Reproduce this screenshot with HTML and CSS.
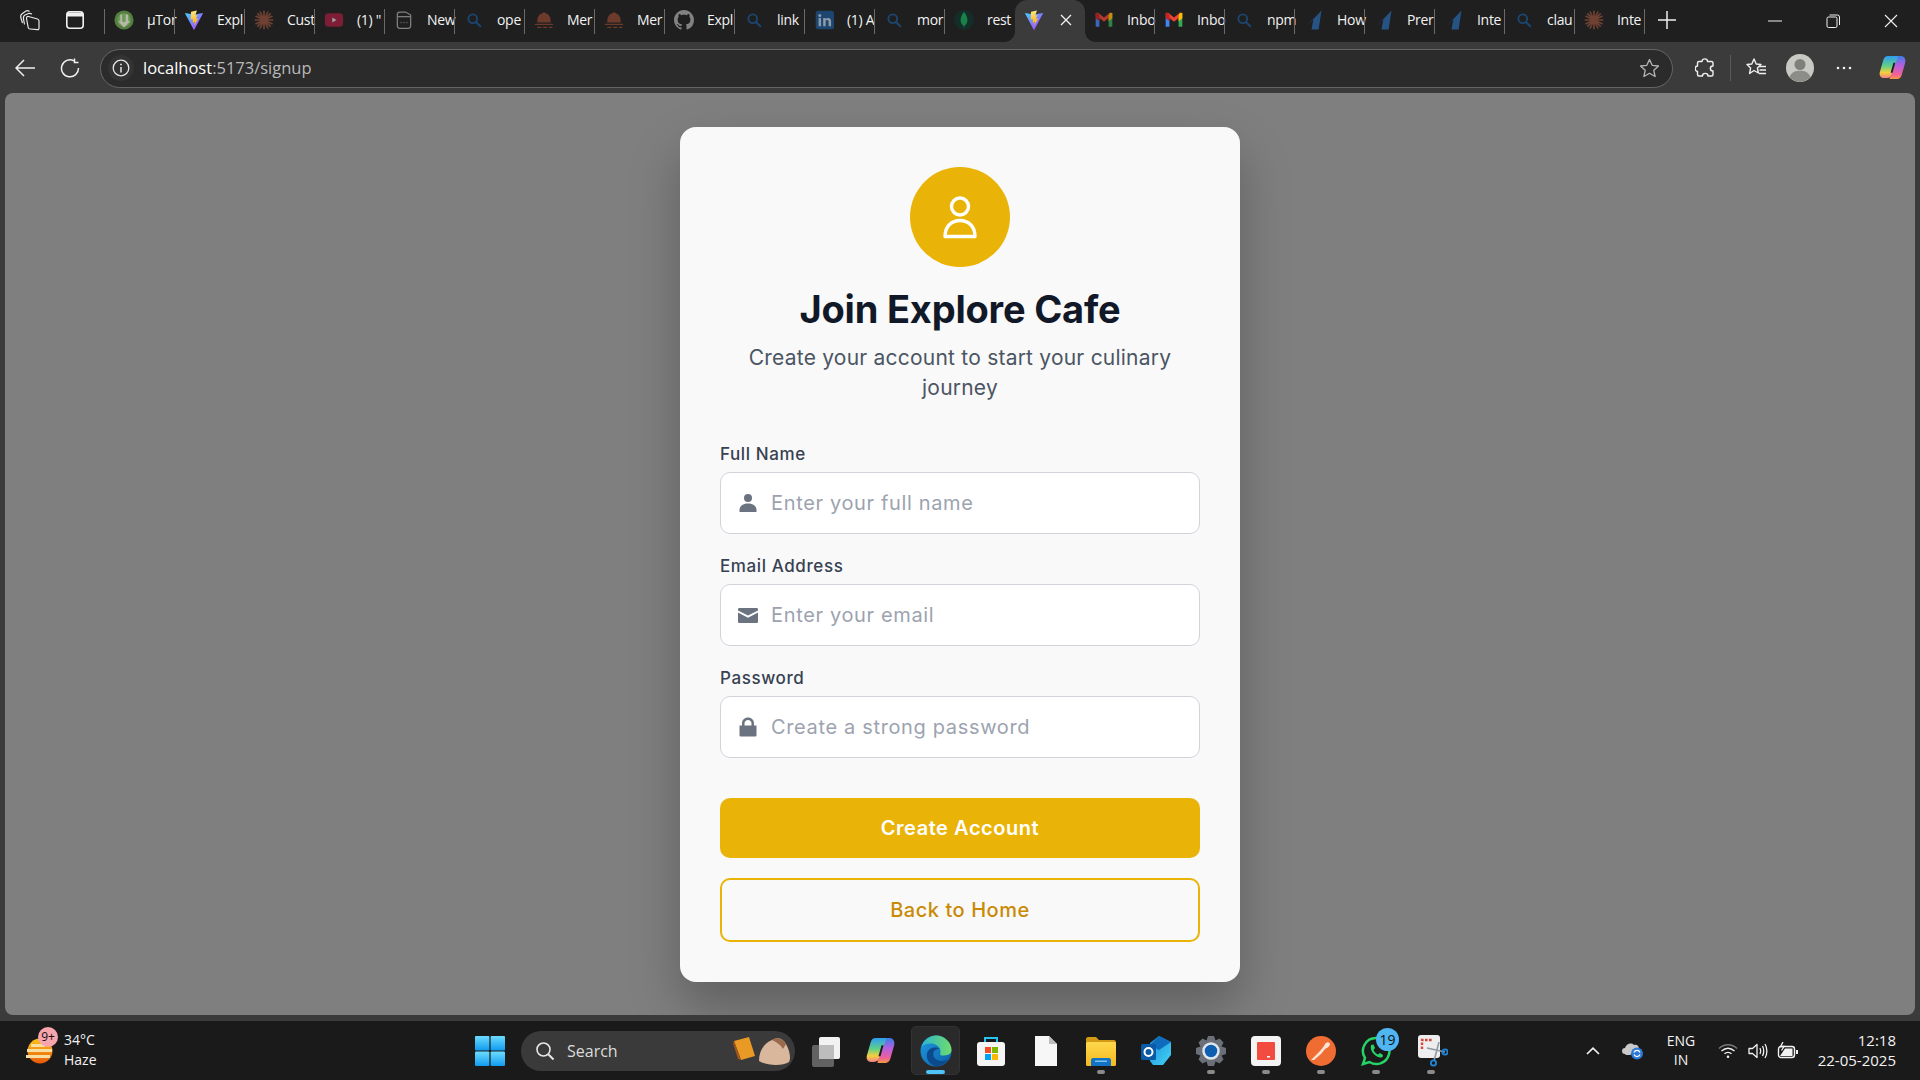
FILE: index.html
```html
<!DOCTYPE html>
<html lang="en">
<head>
<meta charset="utf-8">
<title>Explore Cafe - Sign up</title>
<link rel="stylesheet" href="styles.css">
</head>
<body>
<svg class="defs" aria-hidden="true">
  <defs>
    <linearGradient id="gViteA" x1="0" y1="0" x2="1" y2="1"><stop offset="0" stop-color="#41d1ff"/><stop offset="1" stop-color="#bd34fe"/></linearGradient>
    <linearGradient id="gViteB" x1="0" y1="0" x2="0" y2="1"><stop offset="0" stop-color="#ffea83"/><stop offset="1" stop-color="#ffa800"/></linearGradient>
    <linearGradient id="gWin" x1="0" y1="0" x2="0" y2="1"><stop offset="0" stop-color="#6ddcff"/><stop offset="1" stop-color="#0f9bf0"/></linearGradient>
    <linearGradient id="gCop" x1="0" y1="0" x2="0" y2="1"><stop offset="0" stop-color="#2f9df0"/><stop offset=".45" stop-color="#5fd08a"/><stop offset=".75" stop-color="#f5d03c"/><stop offset="1" stop-color="#f3808a"/></linearGradient>
    <linearGradient id="gCop2" x1="0" y1="0" x2="0" y2="1"><stop offset="0" stop-color="#3a7fe8"/><stop offset=".4" stop-color="#b45fe0"/><stop offset=".8" stop-color="#f0609a"/><stop offset="1" stop-color="#f79a3c"/></linearGradient>
    <linearGradient id="gEdge" x1="0" y1="0" x2="1" y2="1"><stop offset="0" stop-color="#1f9be0"/><stop offset="1" stop-color="#0c5ea8"/></linearGradient>
    <linearGradient id="gEdge2" x1="0" y1="0" x2="1" y2="0"><stop offset="0" stop-color="#2bb6d0"/><stop offset="1" stop-color="#6fdc6a"/></linearGradient>
    <linearGradient id="gSun" x1="0" y1="0" x2="0" y2="1"><stop offset="0" stop-color="#fcc419"/><stop offset="1" stop-color="#e8590c"/></linearGradient>
    <linearGradient id="gFold" x1="0" y1="0" x2="0" y2="1"><stop offset="0" stop-color="#ffd84d"/><stop offset="1" stop-color="#f5b91f"/></linearGradient>
    <linearGradient id="gOut" x1="0" y1="0" x2="1" y2="1"><stop offset="0" stop-color="#1a8fdc"/><stop offset="1" stop-color="#45d4f5"/></linearGradient>

    <symbol id="f-vite" viewBox="0 0 24 24">
      <path d="M1 3.500 12 5.500 23 3.500 12.500 23.500Q12 24 11.500 23.500Z" fill="url(#gViteA)"/>
      <path d="M15.500 .5 8.500 2 8 11.500 11 11 10.200 15 13 14.300 12.500 18.500 17 10 14 10.600 16.200 6 13.500 6.500Z" fill="url(#gViteB)"/>
    </symbol>
    <symbol id="f-claude" viewBox="0 0 24 24">
      <g stroke="#8e4f3a" stroke-width="2" stroke-linecap="round">
        <path d="M12 1.500V22.500M1.500 12H22.500M4.600 4.600 19.400 19.400M19.400 4.600 4.600 19.400M7.500 2.400 16.500 21.600M16.500 2.400 7.500 21.600M2.400 7.500 21.600 16.500M2.400 16.500 21.600 7.500"/>
      </g>
    </symbol>
    <symbol id="f-search" viewBox="-4 -4 32 32">
      <circle cx="10" cy="10" r="7" fill="none" stroke="#1c5590" stroke-width="3"/>
      <path d="M15.500 15.500 22 22" stroke="#1c5590" stroke-width="3.400" stroke-linecap="round"/>
    </symbol>
    <symbol id="f-mern" viewBox="0 0 24 24">
      <path d="M4 15C3.500 9 6 5 9 4.500 10 2.500 14 2.500 15 4.500 18 5 20.500 9 20 15Z" fill="#8a4632"/>
      <path d="M1 16.500H23V18H1ZM4 20H9V21.500H4ZM11 20H16V21.500H11ZM18 20H22V21.500H18Z" fill="#8a4632"/>
    </symbol>
    <symbol id="f-gmail" viewBox="0 0 24 24">
      <path d="M2 6V20H6.500V10.500Z" fill="#4285f4"/>
      <path d="M22 6V20H17.500V10.500Z" fill="#34a853"/>
      <path d="M2 6 12 14 22 6V3.500L19 3.200 12 9 5 3.200 2 3.500Z" fill="#ea4335"/>
      <path d="M17.500 7 19 3.200 22 3.500V10L17.500 13.500Z" fill="#fbbc04"/>
      <path d="M2 3.500 5 3.200 6.500 7V13.500L2 10Z" fill="#c5221f"/>
    </symbol>
    <symbol id="f-one" viewBox="0 0 24 24">
      <path d="M21 .5 17.500 23.500H9L11.500 10 2.500 20Z" fill="#2a68ac"/>
    </symbol>
    <symbol id="f-copilot" viewBox="0 0 28 26">
      <path d="M19 25H11L17 4C17.500 2.500 19 1 20.500 1H23C26.500 1 28 5 27.200 8L23.500 21C22.800 23.500 21 25 19 25Z" fill="url(#gCop2)"/>
      <path d="M9 1H20L12 22C11.500 23.500 9 24 7.500 24H5C1.500 24 0 21 .8 18L4.500 5C5.200 2.500 7 1 9 1Z" fill="url(#gCop)"/>
      <path d="M17 8H15L12 18.500H14Z" fill="#1d1d1d"/>
    </symbol>
  </defs>
</svg>

<header class="tabbar">
  <div class="tabbar-lead">
    <span class="lead-btn">
      <svg width="22" height="22" viewBox="0 0 22 22" fill="none" stroke="#e8e8e8" stroke-width="1.200" stroke-linejoin="round"><path d="M9.500 7.500 18.500 10Q20 10.500 20 12V19Q20 20.800 18.500 20.600L11 20Q9.500 20 9.200 18.500L7.500 9.500Q7.300 7.200 9.500 7.500Z"/><path d="M5.500 15.500 4.500 10Q4 7 6 6L9.500 4.500Q11 4 13 5"/><path d="M3.500 14 1.800 8.500Q1.300 5.500 3.500 4.500L7 2Q8.500 1.200 10.500 2.500"/></svg>
    </span>
    <span class="lead-btn">
      <svg width="20" height="20" viewBox="0 0 20 20" fill="none" stroke="#f0f0f0" stroke-width="1.600"><rect x="1.800" y="1.800" width="16.400" height="16.400" rx="3"/><path d="M2 4.500H18" stroke-width="4"/></svg>
    </span>
  </div>
  <nav class="tabs">
    <div class="tab tab-first"><svg class="fav fav-live" viewBox="0 0 24 24"><circle cx="12" cy="12" r="11.500" fill="#557f40"/><circle cx="12" cy="12" r="8" fill="#6b9a55"/><path d="M7.500 5.500H9.800V13C9.800 15.200 14 15.200 14 13V5.500H17V13.500H19.500L12 21 5 13.500H7.500Z" fill="#b8b8a8"/></svg><span class="tab-label">µTor</span></div>
    <div class="tab tab-live"><svg class="fav"><use href="#f-vite"/></svg><span class="tab-label">Expl</span></div>
    <div class="tab"><svg class="fav"><use href="#f-claude"/></svg><span class="tab-label">Cust</span></div>
    <div class="tab"><svg class="fav" viewBox="0 0 24 24"><rect x="1" y="4" width="22" height="16" rx="4.500" fill="#a31d40"/><path d="M10 9 15 12 10 15Z" fill="#d0d0d0"/></svg><span class="tab-label">(1) "</span></div>
    <div class="tab"><svg class="fav" viewBox="0 0 24 24" fill="none" stroke="#a8a8a8" stroke-width="1.500"><path d="M4 5.500A3 3 0 0 1 7 2.500H14L20 6V19A3 3 0 0 1 17 22H7A3 3 0 0 1 4 19Z"/><path d="M4 8H20"/><path d="M8 15H9M11.500 15H12.500M15 15H16" stroke-width="2"/></svg><span class="tab-label">New</span></div>
    <div class="tab"><svg class="fav"><use href="#f-search"/></svg><span class="tab-label">ope</span></div>
    <div class="tab"><svg class="fav"><use href="#f-mern"/></svg><span class="tab-label">Mer</span></div>
    <div class="tab"><svg class="fav"><use href="#f-mern"/></svg><span class="tab-label">Mer</span></div>
    <div class="tab"><svg class="fav" viewBox="0 0 16 16"><path fill="#a8a8a8" d="M8 0C3.580 0 0 3.580 0 8c0 3.540 2.290 6.530 5.470 7.590.4.070.55-.17.55-.38 0-.19-.01-.82-.01-1.490-2.010.37-2.530-.49-2.690-.94-.09-.23-.48-.94-.82-1.130-.28-.15-.68-.52-.01-.53.63-.01 1.080.58 1.230.82.72 1.210 1.870.87 2.330.66.070-.52.28-.87.51-1.070-1.780-.2-3.640-.89-3.640-3.950 0-.87.31-1.590.82-2.150-.08-.2-.36-1.020.08-2.120 0 0 .67-.21 2.200.82.64-.18 1.320-.27 2-.27.68 0 1.360.09 2 .27 1.530-1.040 2.200-.82 2.200-.82.44 1.100.16 1.920.08 2.120.51.56.82 1.270.82 2.150 0 3.070-1.870 3.750-3.650 3.950.29.25.54.73.54 1.480 0 1.070-.01 1.930-.01 2.200 0 .21.15.46.55.38A8.013 8.013 0 0016 8c0-4.420-3.580-8-8-8z"/></svg><span class="tab-label">Expl</span></div>
    <div class="tab"><svg class="fav"><use href="#f-search"/></svg><span class="tab-label">link</span></div>
    <div class="tab"><svg class="fav" viewBox="0 0 24 24"><rect x="2" y="1" width="22" height="22" rx="3" fill="#1b5590"/><g fill="#b7c9dc"><rect x="5.500" y="9.500" width="3" height="10"/><circle cx="7" cy="6.500" r="1.800"/><path d="M11 9.500H14V11C15.500 8.800 20.500 8.500 20.500 13.500V19.500H17.500V14C17.500 11.500 14 11.500 14 14V19.500H11Z"/></g></svg><span class="tab-label">(1) A</span></div>
    <div class="tab"><svg class="fav"><use href="#f-search"/></svg><span class="tab-label">mor</span></div>
    <div class="tab tab-prev"><svg class="fav" viewBox="0 0 24 24"><circle cx="12" cy="12" r="12" fill="#12332c"/><path d="M12 2C8.500 7 7.500 10 8 13.500 8.500 16.500 10.500 18.500 11.500 19L12 22.500 12.500 19C13.500 18.500 15.500 16.500 16 13.500 16.500 10 15.500 7 12 2Z" fill="#16a85a"/></svg><span class="tab-label">rest</span></div>
    <div class="tab tab-active">
      <svg class="fav fav-live"><use href="#f-vite"/></svg>
      <svg class="tab-close" viewBox="0 0 12 12"><path d="M1 1 11 11M11 1 1 11" stroke="#f2f2f2" stroke-width="1.300"/></svg>
    </div>
    <div class="tab"><svg class="fav"><use href="#f-gmail"/></svg><span class="tab-label">Inbo</span></div>
    <div class="tab tab-live"><svg class="fav"><use href="#f-gmail"/></svg><span class="tab-label">Inbo</span></div>
    <div class="tab"><svg class="fav"><use href="#f-search"/></svg><span class="tab-label">npm</span></div>
    <div class="tab"><svg class="fav"><use href="#f-one"/></svg><span class="tab-label">How</span></div>
    <div class="tab"><svg class="fav"><use href="#f-one"/></svg><span class="tab-label">Prer</span></div>
    <div class="tab"><svg class="fav"><use href="#f-one"/></svg><span class="tab-label">Inte</span></div>
    <div class="tab"><svg class="fav"><use href="#f-search"/></svg><span class="tab-label">clau</span></div>
    <div class="tab"><svg class="fav"><use href="#f-claude"/></svg><span class="tab-label">Inte</span></div>
  </nav>
  <span class="new-tab"><svg width="18" height="18" viewBox="0 0 18 18"><path d="M9 0V18M0 9H18" stroke="#f0f0f0" stroke-width="1.500"/></svg></span>
  <div class="win-ctrls">
    <span class="win-btn"><svg width="14" height="14" viewBox="0 0 14 14"><path d="M0 7H14" stroke="#f0f0f0" stroke-width="1"/></svg></span>
    <span class="win-btn"><svg width="14" height="14" viewBox="0 0 14 14" fill="none" stroke="#f0f0f0" stroke-width="1"><rect x="1" y="3" width="10" height="10.500" rx="1.500"/><path d="M3.500 1H11.500A2 2 0 0 1 13.500 3V11"/></svg></span>
    <span class="win-btn"><svg width="14" height="14" viewBox="0 0 14 14"><path d="M1 1 13 13M13 1 1 13" stroke="#f0f0f0" stroke-width="1.100"/></svg></span>
  </div>
</header>

<div class="toolbar">
  <span class="tool-btn"><svg width="20" height="18" viewBox="0 0 20 18" fill="none" stroke="#f0f0f0" stroke-width="1.500"><path d="M20 9H1M9 1 1 9 9 17"/></svg></span>
  <span class="tool-btn"><svg width="20" height="20" viewBox="0 0 20 20" fill="none" stroke="#f0f0f0" stroke-width="1.500"><path d="M14 2.800A8.500 8.500 0 1 0 18.500 10"/><path d="M14.500 .5V4.500H18.500"/></svg></span>
  <div class="address">
    <span class="site-info"><svg width="18" height="18" viewBox="0 0 18 18" fill="none" stroke="#e6e6e6" stroke-width="1.300"><circle cx="9" cy="9" r="7.800"/><path d="M9 8V13.500" stroke-width="1.500"/><path d="M9 4.800V6.200" stroke-width="1.700"/></svg></span>
    <span class="url"><span class="url-host">localhost</span>:5173/signup</span>
    <svg class="star" width="21" height="20" viewBox="0 0 21 20" fill="none" stroke="#b5b5b5" stroke-width="1.300"><path d="M10.500 1.500 13.200 7.300 19.500 8 14.800 12.300 16.100 18.500 10.500 15.300 4.900 18.500 6.200 12.300 1.500 8 7.800 7.300Z" stroke-linejoin="round"/></svg>
  </div>
  <div class="tool-right">
    <span class="tool-btn"><svg width="20" height="22" viewBox="0 0 20 22" fill="none" stroke="#f0f0f0" stroke-width="1.400" stroke-linejoin="round"><path d="M7 4.500C7 1 12.500 1 12.500 4.500H16.500C17.500 4.500 18 5 18 6V9C14.500 9 14.500 14 18 14V17.500C18 18.500 17.500 19 16.500 19H13C13 15.500 7.500 15.500 7.500 19H4C3 19 2.500 18.500 2.500 17.500V14.500C-.5 14.500-.5 9 2.500 9V6C2.500 5 3 4.500 4 4.500Z"/></svg></span>
    <span class="tool-sep"></span>
    <span class="tool-btn"><svg width="22" height="22" viewBox="0 0 22 22" fill="none" stroke="#f0f0f0" stroke-width="1.400" stroke-linejoin="round"><path d="M9 2 11.200 7 16 7.500 12.400 11 13.400 16 9 13.500 4.600 16.500 5.600 11 2 7.500 6.800 7Z"/><path d="M14 9.500H21M14.500 13H21M14 16.500H21"/></svg></span>
    <span class="tool-btn"><svg width="28" height="28" viewBox="0 0 28 28"><circle cx="14" cy="14" r="14" fill="#c9c9c4"/><circle cx="14" cy="10.500" r="5.500" fill="#7f7f7b"/><path d="M3.500 23C6 17.500 10 16.800 14 16.800S22 17.500 24.500 23A14 14 0 0 1 3.500 23Z" fill="#8c8c88"/></svg></span>
    <span class="tool-btn"><svg width="16" height="4" viewBox="0 0 16 4" fill="#f0f0f0"><circle cx="2" cy="2" r="1.300"/><circle cx="8" cy="2" r="1.300"/><circle cx="14" cy="2" r="1.300"/></svg></span>
    <span class="tool-btn tool-cop"><svg width="27" height="25"><use href="#f-copilot"/></svg></span>
  </div>
</div>

<main class="viewport">
  <section class="card">
    <div class="avatar">
      <svg width="100" height="100" viewBox="0 0 100 100" fill="none" stroke="#fff" stroke-width="3.400" stroke-linejoin="round"><circle cx="50" cy="39.500" r="8.500"/><path d="M35 69.500C35 59 42 53.500 50 53.500S65 59 65 69.500Z"/></svg>
    </div>
    <h1 class="title">Join Explore Cafe</h1>
    <p class="subtitle">Create your account to start your culinary journey</p>
    <form class="form">
      <div class="form-group">
        <label class="form-label" for="name">Full Name</label>
        <div class="field">
          <svg class="field-icon" width="22" height="22" viewBox="0 0 22 22" fill="#6b7280"><circle cx="11" cy="6" r="4"/><path d="M2.500 20V18C2.500 14 6 11.500 11 11.500S19.500 14 19.500 18V20Z"/></svg>
          <input class="field-input" id="name" type="text" placeholder="Enter your full name">
        </div>
      </div>
      <div class="form-group">
        <label class="form-label" for="email">Email Address</label>
        <div class="field">
          <svg class="field-icon" width="22" height="22" viewBox="0 0 22 22" fill="#6b7280"><path d="M1 5.500C1 4.500 1.500 4 2.500 4H19.500C20.500 4 21 4.500 21 5.500V6.500L11 11.500 1 6.500Z"/><path d="M1 8.500 11 13.800 21 8.500V17.500C21 18.500 20.500 19 19.500 19H2.500C1.500 19 1 18.500 1 17.500Z"/></svg>
          <input class="field-input" id="email" type="email" placeholder="Enter your email">
        </div>
      </div>
      <div class="form-group">
        <label class="form-label" for="password">Password</label>
        <div class="field">
          <svg class="field-icon" width="22" height="22" viewBox="0 0 22 22" fill="#6b7280"><path d="M5 9.500V7.500C5 4 7.500 1.500 11 1.500S17 4 17 7.500V9.500H19.500V19C19.500 20 19 20.500 18 20.500H4C3 20.500 2.500 20 2.500 19V9.500ZM7.500 9.500H14.500V7.500C14.500 5.500 13 4 11 4S7.500 5.500 7.500 7.500Z"/></svg>
          <input class="field-input" id="password" type="password" placeholder="Create a strong password">
        </div>
      </div>
      <button class="btn btn-primary" type="button">Create Account</button>
      <button class="btn btn-outline" type="button">Back to Home</button>
    </form>
  </section>
</main>

<footer class="taskbar">
  <div class="weather">
    <span class="weather-icon">
      <svg width="30" height="26" viewBox="0 0 30 26"><circle cx="15" cy="13" r="12.500" fill="url(#gSun)"/><path d="M6 6H20V9H6ZM2 11H27V14H2ZM1 17H25V20H1Z" fill="#f6dfa0"/></svg>
      <span class="weather-badge">9+</span>
    </span>
    <div class="weather-text"><span>34°C</span><span>Haze</span></div>
  </div>
  <span class="start">
    <svg width="30" height="30" viewBox="0 0 30 30" fill="url(#gWin)"><rect x="0" y="0" width="14.400" height="14.400" rx="1"/><rect x="15.600" y="0" width="14.400" height="14.400" rx="1"/><rect x="0" y="15.600" width="14.400" height="14.400" rx="1"/><rect x="15.600" y="15.600" width="14.400" height="14.400" rx="1"/></svg>
  </span>
  <div class="search-pill">
    <svg width="20" height="20" viewBox="0 0 20 20" fill="none" stroke="#e8e8e8" stroke-width="1.600"><circle cx="8.500" cy="8.500" r="6.500"/><path d="M13.500 13.500 18.500 18.500" stroke-width="2"/></svg>
    <span class="search-text">Search</span>
    <svg class="search-art" width="60" height="32" viewBox="0 0 60 32"><path d="M1 6 16 2 22 21 8 25Z" fill="#e99a25"/><path d="M1 6 8 25 5 24 0 8Z" fill="#a5541b"/><path d="M26 26C26 16 31 8 39 5 44 2 50 3 53 9 57 16 58 24 56 27 50 31 34 31 26 26Z" fill="#d9b79c"/><path d="M39 5C44 2 50 3 53 9L50 14C47 9 43 7 39 5Z" fill="#9a6a4c"/></svg>
  </div>
  <div class="task-icons">
    <span class="task-icon"><svg width="32" height="32" viewBox="0 0 32 32"><rect x="9" y="2" width="21" height="22" rx="2" fill="#f2f2f2"/><rect x="2" y="10" width="22" height="22" rx="2" fill="#6a6a6a" opacity=".9"/><rect x="9" y="10" width="15" height="14" fill="#bdbdbd"/></svg></span>
    <span class="task-icon"><svg width="29" height="27"><use href="#f-copilot"/></svg></span>
    <span class="task-icon task-active"><svg width="32" height="32" viewBox="0 0 32 32"><circle cx="16" cy="16" r="15.500" fill="url(#gEdge)"/><path d="M1.500 12C4 3 12 .5 16 .5 25 .5 31.500 8 31.500 15 31.500 19.500 27 20.500 22.500 20.500 19 20.500 20.500 18 20.500 16 20 11 15 8.500 10.500 8.500 6.500 8.500 3 10 1.500 12Z" fill="url(#gEdge2)"/><path d="M16 31C9.500 30 6 24 7 18.500 8.500 13 15 11 19.500 14 14.500 13.500 12 18 14 22 16.500 26.500 23.500 27 28.500 24 25 29 20 31.500 16 31Z" fill="#0d4a8c"/></svg><span class="task-bar"></span></span>
    <span class="task-icon"><svg width="30" height="32" viewBox="0 0 30 32"><path d="M9 8V3H21V8" fill="none" stroke="#27c2f0" stroke-width="2"/><rect x="1" y="7" width="28" height="24" rx="3" fill="#f5f5f5"/><rect x="9" y="12" width="6" height="6" fill="#f25022"/><rect x="16" y="12" width="6" height="6" fill="#7fba00"/><rect x="9" y="19" width="6" height="6" fill="#00a4ef"/><rect x="16" y="19" width="6" height="6" fill="#ffb900"/></svg></span>
    <span class="task-icon"><svg width="22" height="30" viewBox="0 0 22 30"><path d="M0 0H14L22 8V30H0Z" fill="#f7f7f7"/><path d="M14 0 22 8H14Z" fill="#bdbdbd"/></svg></span>
    <span class="task-icon"><svg width="30" height="30" viewBox="0 0 30 30"><path d="M0 3C0 2 1 1 2 1H10L13 4H28C29 4 30 5 30 6V8H0Z" fill="#d39a16"/><rect x="0" y="6" width="30" height="24" rx="1.500" fill="url(#gFold)"/><path d="M5 30V24C5 23 6 22 7 22H23C24 22 25 23 25 24V30Z" fill="#1273c4"/><rect x="9" y="24.500" width="12" height="1.500" fill="#7fc0ee"/></svg><span class="task-dot"></span></span>
    <span class="task-icon"><svg width="30" height="32" viewBox="0 0 30 32"><path d="M9 8 18 1 30 7V20L22 30H12L9 26Z" fill="url(#gOut)"/><path d="M18 1 30 7 18 15 9 10Z" fill="#0f6cbd"/><rect x="0" y="9" width="15" height="16" rx="1.500" fill="#0a5aa8"/><circle cx="7.500" cy="17" r="4" fill="none" stroke="#fff" stroke-width="2"/></svg></span>
    <span class="task-icon"><svg width="30" height="30" viewBox="0 0 30 30"><path d="M12 0H18L19.500 4.500 23.500 2.500 27.500 6.500 25.500 10.500 30 12V18L25.500 19.500 27.500 23.500 23.500 27.500 19.500 25.500 18 30H12L10.500 25.500 6.500 27.500 2.500 23.500 4.500 19.500 0 18V12L4.500 10.500 2.500 6.500 6.500 2.500 10.500 4.500Z" fill="#6b7078"/><circle cx="15" cy="15" r="7.500" fill="#0f5fb0" stroke="#dfe6ee" stroke-width="2.500"/></svg><span class="task-dot"></span></span>
    <span class="task-icon"><svg width="30" height="30" viewBox="0 0 30 30"><rect width="30" height="30" rx="4" fill="#f4f4f4"/><rect x="6" y="6" width="18" height="18" rx="1" fill="#f24b40"/><rect x="16" y="20" width="3" height="1.500" fill="#fff"/></svg><span class="task-dot"></span></span>
    <span class="task-icon"><svg width="30" height="30" viewBox="0 0 30 30"><circle cx="15" cy="15" r="15" fill="#ef6c33"/><path d="M5 24 14 15 18 10C19 7 22 5 23.500 7 25 9 22 12 19.500 12.500L15 18 8 24Z" fill="#fbe3d6"/></svg><span class="task-dot"></span></span>
    <span class="task-icon"><svg width="30" height="30" viewBox="0 0 30 30"><path d="M15 2A13 13 0 0 0 4 22L2 28 8.500 26A13 13 0 1 0 15 2Z" fill="none" stroke="#25d366" stroke-width="2.500"/><path d="M10 9 12.500 8.500 14 12 12.500 14C13.500 16 15 17.500 17 18.500L19 17 22 19 21.500 21C18 23.500 8 17 10 9Z" fill="#25d366"/></svg><span class="task-badge">19</span><span class="task-dot"></span></span>
    <span class="task-icon"><svg width="34" height="34" viewBox="0 0 34 34"><rect x="4" y="1" width="22" height="23" rx="3" fill="#eeeeee"/><path d="M8 15V6H18" fill="none" stroke="#d8433a" stroke-width="2.400" stroke-dasharray="2.600 1.400"/><path d="M20 27 25 8M31 18 13 14" stroke="#8d9aa6" stroke-width="1.600"/><circle cx="19.500" cy="29" r="2.600" fill="none" stroke="#1d86d9" stroke-width="1.800"/><circle cx="31" cy="18" r="2.600" fill="none" stroke="#1d86d9" stroke-width="1.800"/></svg><span class="task-dot"></span></span>
  </div>
  <div class="tray">
    <span class="tray-chev"><svg width="14" height="8" viewBox="0 0 14 8" fill="none" stroke="#f2f2f2" stroke-width="1.700"><path d="M1 7 7 1.200 13 7"/></svg></span>
    <span class="tray-cloud"><svg width="22" height="18" viewBox="0 0 22 18"><path d="M3 12A3 3 0 0 1 3 6C4 2 9 0 12 3 15 2 17 4 17 7L8 13H4Z" fill="#c9c9c9"/><circle cx="15" cy="11.500" r="6" fill="#2d7ad6"/><path d="M12 10.500A3.200 3.200 0 0 1 18 10.500M18 12.500A3.200 3.200 0 0 1 12 12.500" fill="none" stroke="#fff" stroke-width="1.200"/></svg></span>
    <div class="tray-lang"><span>ENG</span><span>IN</span></div>
    <span class="tray-icon"><svg width="20" height="16" viewBox="0 0 20 16" fill="none" stroke="#f2f2f2" stroke-width="1.400"><path d="M1 5.500C6 .5 14 .5 19 5.500" stroke="#777"/><path d="M3.500 8C7.500 4.500 12.500 4.500 16.500 8"/><path d="M6.500 10.800C8.500 9 11.500 9 13.500 10.800"/><circle cx="10" cy="13.800" r="1.300" fill="#f2f2f2" stroke="none"/></svg></span>
    <span class="tray-icon"><svg width="20" height="18" viewBox="0 0 20 18" fill="none" stroke="#f2f2f2" stroke-width="1.300"><path d="M1 6.500H4.500L9 2.500V15.500L4.500 11.500H1Z" stroke-linejoin="round"/><path d="M12 6C13 8 13 10 12 12M14.500 4C16 7 16 11 14.500 14M17 2C19.500 6 19.500 12 17 16"/></svg></span>
    <span class="tray-icon"><svg width="22" height="18" viewBox="0 0 22 18" fill="none" stroke="#f2f2f2" stroke-width="1.400"><rect x="1.500" y="4.500" width="16" height="11" rx="2.500"/><path d="M20 8V12" stroke-width="2"/><path d="M3 14 8 6.500H15.500V14Z" fill="#f2f2f2" stroke="none"/><path d="M6 0 3.500 4.500H7L4.500 8.500" stroke-width="1.300"/></svg></span>
    <div class="tray-clock"><span>12:18</span><span>22-05-2025</span></div>
  </div>
</footer>
</body>
</html>
```

FILE: styles.css
```css
* { box-sizing: border-box; }

html, body { margin: 0; height: 100%; }

body {
  display: flex;
  flex-direction: column;
  width: 1920px;
  height: 1080px;
  overflow: hidden;
  background: #3b3b3b;
  font-family: "Open Sans", "Noto Sans", sans-serif;
  color: #f2f2f2;
}

.defs { display: block; width: 0; height: 0; flex: none; }

/* Tab strip */
.tabbar {
  flex: 0 0 42px;
  display: flex;
  align-items: stretch;
  background: #1f1f1f;
}
.tabbar-lead { flex: 0 0 105px; display: flex; padding-left: 7px; }
.lead-btn { flex: 0 0 45px; display: flex; align-items: center; justify-content: center; padding-bottom: 2px; }
.tabs { display: flex; flex: 0 0 1540px; }
.tab {
  position: relative;
  flex: 0 0 70px;
  min-width: 0;
  display: flex;
  align-items: center;
  padding: 0 0 2px 9px;
}
.tab::after {
  content: "";
  position: absolute;
  right: 0;
  top: 9px;
  bottom: 8px;
  width: 1px;
  background: #6a6a6a;
}
.tab-first::before {
  content: "";
  position: absolute;
  left: -1px;
  top: 9px;
  bottom: 8px;
  width: 1px;
  background: #6a6a6a;
}
.tab-prev::after { display: none; }
.fav { flex: 0 0 20px; width: 20px; height: 20px; opacity: .72; }
.fav-live, .tab-live .fav { opacity: 1; }
.tab-label {
  margin-left: 13px;
  white-space: nowrap;
  font-size: 14px;
  line-height: 20px;
  letter-spacing: -.3px;
  color: #f2f2f2;
}
.tab-active {
  background: #3b3b3b;
  border-radius: 12px 12px 0 0;
}
.tab-active::before, .tab-active::after {
  content: "";
  position: absolute;
  top: auto;
  bottom: 0;
  width: 10px;
  height: 10px;
}
.tab-active::before {
  left: -10px;
  background: radial-gradient(circle at 0 0, transparent 9.5px, #3b3b3b 10px);
}
.tab-active::after {
  right: -10px;
  background: radial-gradient(circle at 100% 0, transparent 9.5px, #3b3b3b 10px);
}
.tab-close { flex: 0 0 12px; width: 12px; height: 12px; margin-left: 16px; }

.new-tab { flex: 0 0 44px; display: flex; align-items: center; justify-content: center; padding-bottom: 2px; }
.win-ctrls { margin-left: auto; display: flex; }
.win-btn { flex: 0 0 58px; display: flex; align-items: center; justify-content: center; }

/* Toolbar */
.toolbar {
  flex: 0 0 51px;
  display: flex;
  align-items: center;
  padding-left: 2px;
  background: #3b3b3b;
}
.tool-btn { flex: 0 0 44px; display: flex; align-items: center; justify-content: center; height: 40px; }
.toolbar > .tool-btn { flex-basis: 45px; }
.address {
  flex: 0 0 1573px;
  height: 39px;
  margin-left: 8px;
  margin-top: 1px;
  display: flex;
  align-items: center;
  padding-left: 7px;
  border: 1px solid #666;
  border-radius: 20px;
  background: #2b2b2b;
}
.site-info {
  flex: 0 0 26px;
  height: 26px;
  display: flex;
  align-items: center;
  justify-content: center;
  border-radius: 50%;
  background: #333;
}
.url { margin-left: 9px; padding-bottom: 2px; font-size: 16.5px; color: #b9b9b9; }
.url-host { color: #fff; }
.star { margin-left: auto; margin-right: 12px; }
.tool-right { display: flex; align-items: center; margin-left: 10px; }
.tool-sep { flex: 0 0 1px; height: 26px; margin: 0 3px; background: #5a5a5a; }
.tool-cop { margin-left: 4px; }

/* Page viewport */
.viewport {
  flex: 0 0 922px;
  margin: 0 5px 6px;
  display: flex;
  align-items: center;
  justify-content: center;
  border-radius: 8px;
  background: #7f7f7f;
  overflow: hidden;
}
.card {
  width: 560px;
  padding: 40px;
  display: flex;
  flex-direction: column;
  align-items: center;
  border-radius: 16px;
  background: #f9f9f9;
  box-shadow: 0 25px 50px 0 rgba(0, 0, 0, .25);
  font-family: Inter, "Open Sans", sans-serif;
}
.avatar { flex: 0 0 100px; width: 100px; border-radius: 50%; background: #eab308; }
.avatar svg { display: block; }
.title {
  margin: 20px 0 0;
  font-size: 38px;
  line-height: 44px;
  font-weight: 700;
  letter-spacing: -.2px;
  color: #111827;
}
.subtitle {
  margin: 12px 0 0;
  text-align: center;
  font-size: 21px;
  line-height: 30px;
  letter-spacing: .22px;
  color: #4b5563;
}
.form { align-self: stretch; display: flex; flex-direction: column; margin-top: 39px; }
.form-group { display: flex; flex-direction: column; margin-bottom: 20px; }
.form-label {
  font-size: 17px;
  line-height: 24px;
  font-weight: 500;
  letter-spacing: .6px;
  color: #374151;
  margin-bottom: 6px;
}
.field {
  height: 62px;
  display: flex;
  align-items: center;
  padding-left: 16px;
  border: 1px solid #d1d5db;
  border-radius: 10px;
  background: #fff;
}
.field-icon { flex: 0 0 22px; }
.field-input {
  flex: 1;
  min-width: 0;
  margin-left: 12px;
  padding: 0;
  border: 0;
  outline: 0;
  background: transparent;
  font-family: inherit;
  font-size: 20px;
  letter-spacing: .65px;
  color: #111827;
}
.field-input::placeholder { color: #9ca3af; opacity: 1; }
.btn {
  display: block;
  width: 100%;
  font-family: inherit;
  font-size: 20px;
  font-weight: 600;
  letter-spacing: .55px;
  border-radius: 10px;
  padding: 0;
  cursor: pointer;
}
.btn-primary { height: 60px; margin-top: 20px; border: 0; background: #eab308; color: #fff; }
.btn-outline { height: 64px; margin-top: 20px; border: 2px solid #eab308; background: transparent; color: #ca8a04; font-weight: 500; }

/* Windows taskbar */
.taskbar {
  flex: 0 0 59px;
  display: flex;
  align-items: center;
  background: #1a1a1a;
}
.weather { flex: 0 0 467px; display: flex; align-items: center; padding-left: 25px; }
.weather-icon { position: relative; flex: 0 0 39px; height: 26px; display: block; }
.weather-badge {
  position: absolute;
  left: 13px;
  top: -11px;
  width: 20px;
  height: 20px;
  border-radius: 50%;
  background: #f8a5ad;
  color: #111;
  font-size: 12px;
  line-height: 20px;
  text-align: center;
}
.weather-text { display: flex; flex-direction: column; padding-bottom: 2px; font-size: 14px; line-height: 20px; color: #f2f2f2; }
.start { flex: 0 0 45px; display: flex; align-items: center; justify-content: center; }
.search-pill {
  flex: 0 0 274px;
  height: 40px;
  margin-left: 9px;
  display: flex;
  align-items: center;
  padding: 0 2px 0 14px;
  border-radius: 20px;
  background: #3a3a3a;
}
.search-text { margin-left: 12px; font-size: 16px; color: #dcdcdc; }
.search-art { margin-left: auto; }
.task-icons { display: flex; margin-left: 3px; }
.task-icon {
  position: relative;
  flex: 0 0 55px;
  height: 49px;
  display: flex;
  align-items: center;
  justify-content: center;
}
.task-active::before {
  content: "";
  position: absolute;
  left: 3px;
  right: 3px;
  top: 0;
  bottom: 0;
  border-radius: 5px;
  background: #2a2a2a;
  border: 1px solid #333;
}
.task-icon svg { position: relative; }
.task-bar {
  position: absolute;
  left: 18px;
  bottom: 1px;
  width: 19px;
  height: 4px;
  border-radius: 2px;
  background: #4fc3f7;
}
.task-dot {
  position: absolute;
  left: 24px;
  bottom: 1px;
  width: 8px;
  height: 4px;
  border-radius: 2px;
  background: #8a8a8a;
}
.task-badge {
  position: absolute;
  left: 28px;
  top: 2px;
  width: 23px;
  height: 23px;
  border-radius: 50%;
  background: #4fb6f2;
  color: #111;
  font-size: 14px;
  line-height: 23px;
  text-align: center;
}
.tray { margin-left: auto; margin-right: 24px; display: flex; align-items: center; }
.tray-chev, .tray-cloud { flex: 0 0 40px; display: flex; align-items: center; justify-content: center; }
.tray-lang {
  flex: 0 0 56px;
  display: flex;
  flex-direction: column;
  align-items: center;
  padding-bottom: 2px;
  font-size: 14px;
  line-height: 19px;
  margin-right: 4px;
}
.tray-icon { flex: 0 0 30px; display: flex; align-items: center; justify-content: center; }
.tray-clock {
  flex: 0 0 93px;
  display: flex;
  flex-direction: column;
  align-items: flex-end;
  padding-bottom: 2px;
  font-size: 15px;
  line-height: 20px;
}
```
